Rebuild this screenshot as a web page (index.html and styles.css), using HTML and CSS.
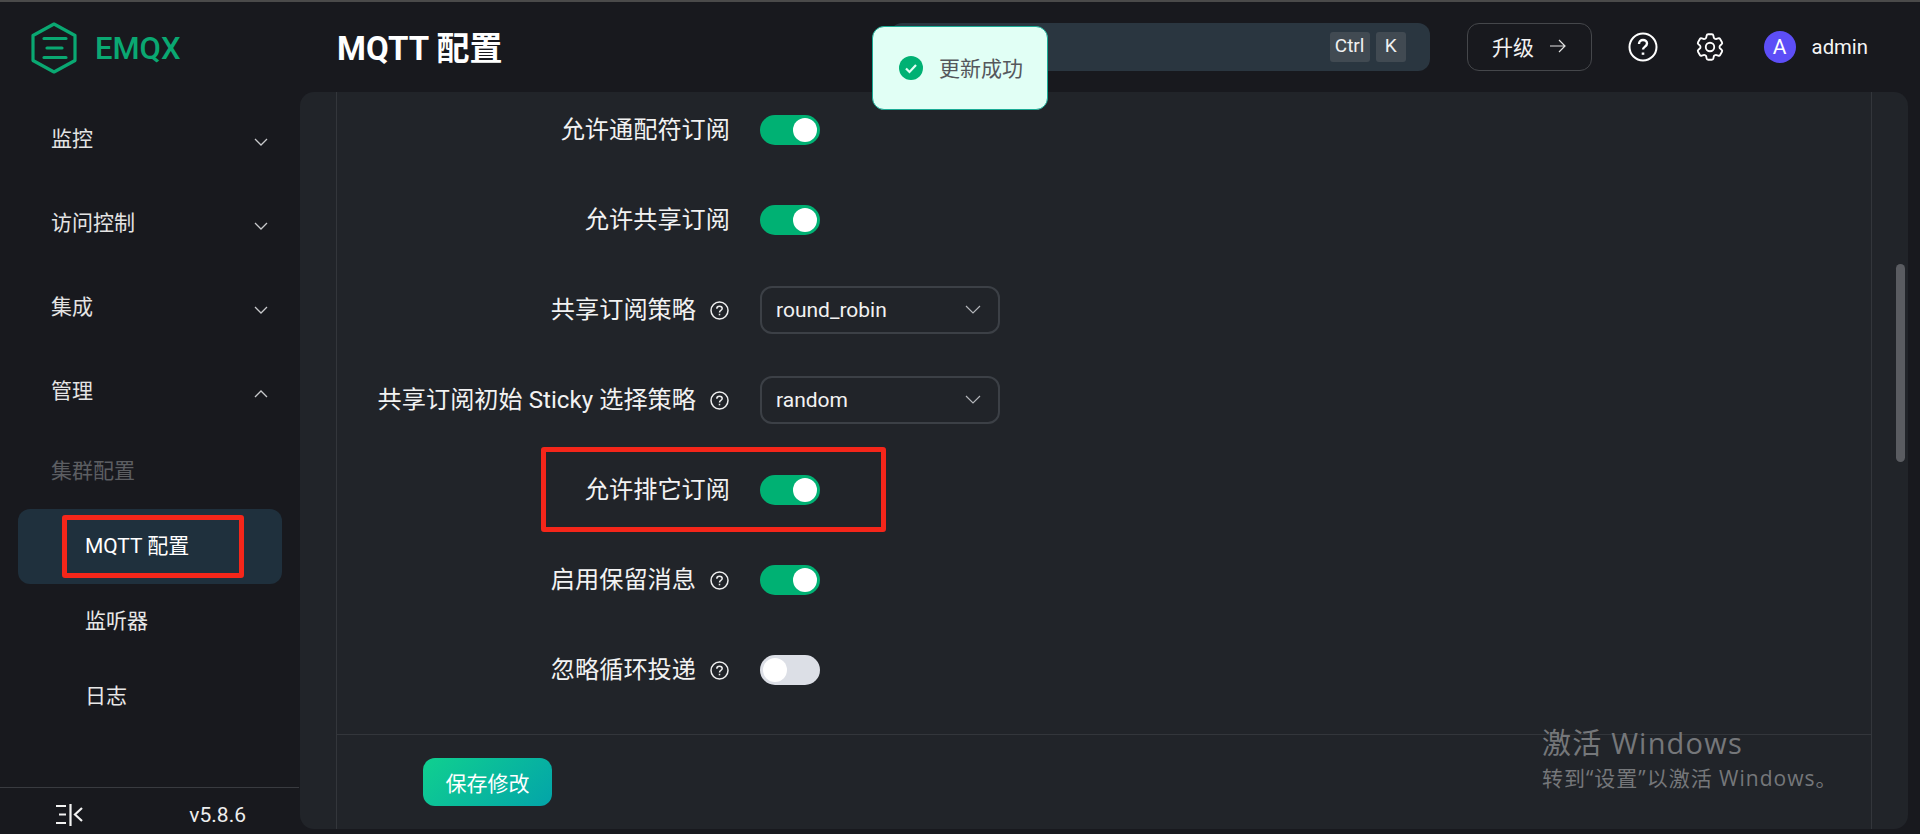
FILE: index.html
```html
<!DOCTYPE html>
<html lang="zh-CN">
<head>
    <meta charset="UTF-8">
    <meta name="viewport" content="width=device-width, initial-scale=1.0">
    <title>MQTT 配置</title>
    <link rel="stylesheet" href="styles.css">
</head>
<body>
    <div class="app">
        <aside class="sidebar">
            <div class="logo">
                <svg class="logo-mark" width="46" height="52" viewBox="0 0 46 52" fill="none" stroke="#0aa872" stroke-width="3.200" stroke-linecap="round" stroke-linejoin="round">
                    <path d="M23 2 44 13.500V38.500L23 50 2 38.500V13.500Z"/>
                    <path d="M13 16.500H35M16 26H31M13 35.500H35"/>
                </svg>
                <span class="logo-text">EMQX</span>
            </div>

            <nav class="nav">
                <div class="nav-item">
                    <span>监控</span>
                    <svg class="chevron" width="16" height="10" viewBox="0 0 16 10" fill="none" stroke="#c8c9cc" stroke-width="1.300"><path d="M2 2 8 8 14 2"/></svg>
                </div>
                <div class="nav-item">
                    <span>访问控制</span>
                    <svg class="chevron" width="16" height="10" viewBox="0 0 16 10" fill="none" stroke="#c8c9cc" stroke-width="1.300"><path d="M2 2 8 8 14 2"/></svg>
                </div>
                <div class="nav-item">
                    <span>集成</span>
                    <svg class="chevron" width="16" height="10" viewBox="0 0 16 10" fill="none" stroke="#c8c9cc" stroke-width="1.300"><path d="M2 2 8 8 14 2"/></svg>
                </div>
                <div class="nav-item">
                    <span>管理</span>
                    <svg class="chevron" width="16" height="10" viewBox="0 0 16 10" fill="none" stroke="#c8c9cc" stroke-width="1.300"><path d="M2 8 8 2 14 8"/></svg>
                </div>
                <div class="nav-group">集群配置</div>
                <div class="nav-sub active">
                    <span>MQTT 配置</span>
                    <div class="mark mark-nav"></div>
                </div>
                <div class="nav-sub">监听器</div>
                <div class="nav-sub">日志</div>
            </nav>

            <div class="sidebar-footer">
                <svg width="27" height="24" viewBox="0 0 27 24" fill="none" stroke="#f2f2f2" stroke-width="2.200">
                    <path d="M0 3H10M3 11.500H10M0 20H10M14.500 1V23"/>
                    <path d="M26 5 19 11.500 26 18"/>
                </svg>
                <span class="version">v5.8.6</span>
            </div>
        </aside>

        <div class="main">
            <header class="header">
                <h1 class="title">MQTT 配置</h1>
                <div class="search">
                    <span class="key key-ctrl">Ctrl</span>
                    <span class="key">K</span>
                </div>
                <button class="upgrade">
                    <span>升级</span>
                    <svg width="16" height="14" viewBox="0 0 16 14" fill="none" stroke="#e4e4e4" stroke-width="1.200"><path d="M0 7H15M9 1 15 7 9 13"/></svg>
                </button>
                <svg class="head-icon" width="30" height="30" viewBox="0 0 30 30" fill="none" stroke="#fff" stroke-width="2">
                    <circle cx="15" cy="15" r="13.500"/>
                    <path d="M11 12c0-2.600 1.800-4 4-4s4 1.400 4 3.600c0 3-4 3-4 6" stroke-width="2.400"/>
                    <path d="M15 20.500v2.300" stroke-width="2.600"/>
                </svg>
                <svg class="head-icon gear" width="34" height="34" viewBox="0 0 24 24" fill="none" stroke="#fff" stroke-width="1.300">
                    <path d="M9.594 3.940c.09-.542.56-.94 1.110-.94h2.593c.55 0 1.020.398 1.110.94l.213 1.281c.063.374.313.686.645.87.074.04.147.083.22.127.325.196.72.257 1.075.124l1.217-.456a1.125 1.125 0 0 1 1.370.49l1.296 2.247a1.125 1.125 0 0 1-.26 1.431l-1.003.827c-.293.241-.438.613-.43.992a7.723 7.723 0 0 1 0 .255c-.008.378.137.75.43.991l1.004.827c.424.35.534.955.26 1.430l-1.298 2.247a1.125 1.125 0 0 1-1.369.491l-1.217-.456c-.355-.133-.75-.072-1.076.124a6.470 6.470 0 0 1-.22.128c-.331.183-.581.495-.644.869l-.213 1.281c-.09.543-.56.94-1.110.94h-2.594c-.55 0-1.019-.398-1.110-.94l-.213-1.281c-.062-.374-.312-.686-.644-.87a6.520 6.520 0 0 1-.22-.127c-.325-.196-.72-.257-1.076-.124l-1.217.456a1.125 1.125 0 0 1-1.369-.49l-1.297-2.247a1.125 1.125 0 0 1 .26-1.431l1.004-.827c.292-.24.437-.613.43-.991a6.932 6.932 0 0 1 0-.255c.007-.38-.138-.751-.43-.992l-1.004-.827a1.125 1.125 0 0 1-.26-1.430l1.297-2.247a1.125 1.125 0 0 1 1.370-.491l1.216.456c.356.133.751.072 1.076-.124.072-.044.146-.086.22-.128.332-.183.582-.495.644-.869l.214-1.280Z"/>
                    <circle cx="12" cy="12" r="3"/>
                </svg>
                <div class="avatar">A</div>
                <span class="username">admin</span>
            </header>

            <section class="panel">
                <div class="panel-inner">
                    <div class="form">
                        <div class="row">
                            <div class="label">允许通配符订阅</div>
                            <span class="switch on"></span>
                        </div>
                        <div class="row">
                            <div class="label">允许共享订阅</div>
                            <span class="switch on"></span>
                        </div>
                        <div class="row">
                            <div class="label">共享订阅策略
                                <svg class="help" width="19" height="19" viewBox="0 0 19 19" fill="none" stroke="#eee" stroke-width="1.500"><circle cx="9.500" cy="9.500" r="8.500"/><path d="M6.800 7.700c0-1.700 1.200-2.500 2.700-2.500s2.700.8 2.700 2.300c0 2-2.700 1.900-2.700 3.900"/><path d="M9.500 12.800v1.500"/></svg>
                            </div>
                            <div class="select">
                                <span>round_robin</span>
                                <svg width="16" height="10" viewBox="0 0 16 10" fill="none" stroke="#b4b6ba" stroke-width="1.200"><path d="M1 1 8 8 15 1"/></svg>
                            </div>
                        </div>
                        <div class="row">
                            <div class="label">共享订阅初始 Sticky 选择策略
                                <svg class="help" width="19" height="19" viewBox="0 0 19 19" fill="none" stroke="#eee" stroke-width="1.500"><circle cx="9.500" cy="9.500" r="8.500"/><path d="M6.800 7.700c0-1.700 1.200-2.500 2.700-2.500s2.700.8 2.700 2.300c0 2-2.700 1.900-2.700 3.900"/><path d="M9.500 12.800v1.500"/></svg>
                            </div>
                            <div class="select">
                                <span>random</span>
                                <svg width="16" height="10" viewBox="0 0 16 10" fill="none" stroke="#b4b6ba" stroke-width="1.200"><path d="M1 1 8 8 15 1"/></svg>
                            </div>
                        </div>
                        <div class="row">
                            <div class="label">允许排它订阅</div>
                            <span class="switch on"></span>
                            <div class="mark mark-form"></div>
                        </div>
                        <div class="row">
                            <div class="label">启用保留消息
                                <svg class="help" width="19" height="19" viewBox="0 0 19 19" fill="none" stroke="#eee" stroke-width="1.500"><circle cx="9.500" cy="9.500" r="8.500"/><path d="M6.800 7.700c0-1.700 1.200-2.500 2.700-2.500s2.700.8 2.700 2.300c0 2-2.700 1.900-2.700 3.900"/><path d="M9.500 12.800v1.500"/></svg>
                            </div>
                            <span class="switch on"></span>
                        </div>
                        <div class="row">
                            <div class="label">忽略循环投递
                                <svg class="help" width="19" height="19" viewBox="0 0 19 19" fill="none" stroke="#eee" stroke-width="1.500"><circle cx="9.500" cy="9.500" r="8.500"/><path d="M6.800 7.700c0-1.700 1.200-2.500 2.700-2.500s2.700.8 2.700 2.300c0 2-2.700 1.900-2.700 3.900"/><path d="M9.500 12.800v1.500"/></svg>
                            </div>
                            <span class="switch"></span>
                        </div>
                    </div>
                    <div class="form-footer">
                        <button class="save">保存修改</button>
                    </div>
                </div>
                <div class="scrollbar"></div>
            </section>
        </div>
    </div>

    <div class="toast">
        <svg width="24" height="24" viewBox="0 0 24 24"><circle cx="12" cy="12" r="12" fill="#00b173"/><path d="M7 12.500 10.500 16 17 9" fill="none" stroke="#e1fff5" stroke-width="2.200"/></svg>
        <span class="toast-text">更新成功</span>
    </div>

    <div class="watermark">
        <div class="watermark-title">激活 Windows</div>
        <div class="watermark-text">转到“设置”以激活 Windows。</div>
    </div>
</body>
</html>
```

FILE: styles.css
```css
* {
    box-sizing: border-box;
}

body {
    margin: 0;
    height: 834px;
    overflow: hidden;
    font-family: Roboto, "Noto Sans CJK SC", sans-serif;
    background-color: #18191e;
    color: #f2f2f2;
    border-top: 2px solid #4a4a4a;
}

.app {
    display: flex;
    height: 832px;
}

/* sidebar */
.sidebar {
    width: 300px;
    flex-shrink: 0;
    display: flex;
    flex-direction: column;
}

.logo {
    height: 90px;
    padding: 20px 0 0 31px;
    display: flex;
    align-items: flex-start;
    gap: 18px;
}

.logo-text {
    padding-top: 1px;
    font-size: 31px;
    font-weight: 500;
    line-height: 52px;
    color: #0aa872;
}

.nav {
    flex: 1;
    padding-top: 15px;
}

.nav-item {
    height: 60px;
    margin-bottom: 24px;
    padding: 0 31px 0 51px;
    display: flex;
    align-items: center;
    justify-content: space-between;
    font-size: 21px;
    color: #e4e4e4;
}

.chevron {
    margin-top: 10px;
}

.nav-group {
    height: 57px;
    margin-bottom: 9px;
    padding-left: 51px;
    line-height: 57px;
    font-size: 21px;
    color: #5c5e62;
}

.nav-sub {
    position: relative;
    height: 75px;
    margin: 0 18px;
    padding-left: 67px;
    line-height: 75px;
    font-size: 21px;
    color: #e8e8e8;
    border-radius: 12px;
}

.nav-sub.active {
    background-color: #1f303d;
    color: #fff;
}

.mark {
    position: absolute;
    border: 5px solid #f5261a;
    border-radius: 3px;
}

.mark-nav {
    left: 44px;
    top: 6px;
    width: 182px;
    height: 63px;
}

.sidebar-footer {
    height: 47px;
    margin-right: 1px;
    padding: 8px 53px 0 56px;
    border-top: 1px solid #393b40;
    display: flex;
    align-items: center;
    justify-content: space-between;
}

.version {
    font-size: 21px;
    color: #eee;
}

/* top bar */
.main {
    flex: 1;
    min-width: 0;
    display: flex;
    flex-direction: column;
}

.header {
    height: 90px;
    flex-shrink: 0;
    padding: 0 52px 0 37px;
    display: flex;
    align-items: center;
}

.title {
    flex: 1;
    margin: 0;
    padding-bottom: 2px;
    font-size: 33px;
    font-weight: 700;
    color: #fff;
}

.search {
    width: 540px;
    height: 48px;
    margin-right: 37px;
    padding-right: 24px;
    display: flex;
    align-items: center;
    justify-content: flex-end;
    gap: 6px;
    background-color: #2a3640;
    border-radius: 12px;
}

.key {
    width: 30px;
    height: 30px;
    line-height: 28px;
    text-align: center;
    font-size: 19px;
    color: #f0f0f0;
    background-color: #414a52;
    border-radius: 3px;
}

.key-ctrl {
    width: 40px;
}

.upgrade {
    width: 125px;
    height: 48px;
    margin-right: 36px;
    padding: 0 0 2px;
    display: flex;
    align-items: center;
    justify-content: center;
    gap: 16px;
    font-family: inherit;
    font-size: 21px;
    color: #f2f2f2;
    background: none;
    border: 1px solid #45474b;
    border-radius: 12px;
}

.head-icon {
    flex-shrink: 0;
}

.gear {
    margin-left: 35px;
}

.avatar {
    width: 32px;
    height: 32px;
    margin-left: 37px;
    line-height: 32px;
    text-align: center;
    font-size: 21px;
    color: #fff;
    background-color: #5d4ef7;
    border-radius: 50%;
}

.username {
    margin-left: 16px;
    font-size: 20.300px;
    color: #f5f5f5;
}

/* form panel */
.panel {
    position: relative;
    flex: 1;
    min-height: 0;
    margin: 0 12px 5px 0;
    padding: 0 36px;
    background-color: #212429;
    border-radius: 14px;
}

.panel-inner {
    height: 100%;
    display: flex;
    flex-direction: column;
    border-left: 1px solid #33363b;
    border-right: 1px solid #33363b;
}

.form {
    flex: 1;
    min-height: 0;
    padding-top: 14px;
}

.row {
    position: relative;
    height: 48px;
    margin-bottom: 42px;
    display: flex;
    align-items: center;
    gap: 30px;
}

.label {
    width: 393px;
    display: flex;
    align-items: center;
    justify-content: flex-end;
    font-size: 24.200px;
    line-height: 32px;
    color: #f2f2f2;
}

.help {
    margin: 0 1px 0 14px;
}

.switch {
    position: relative;
    width: 60px;
    height: 30px;
    background-color: #dcdfe6;
    border-radius: 15px;
}

.switch::after {
    content: "";
    position: absolute;
    left: 3px;
    top: 3px;
    width: 24px;
    height: 24px;
    background-color: #fff;
    border-radius: 50%;
}

.switch.on {
    background-color: #00b173;
}

.switch.on::after {
    left: 33px;
}

.select {
    width: 240px;
    height: 48px;
    padding: 0 17px 0 14px;
    display: flex;
    align-items: center;
    justify-content: space-between;
    font-size: 21px;
    color: #f2f2f2;
    border: 2px solid #3c4046;
    border-radius: 12px;
}

.mark-form {
    left: 204px;
    top: -19px;
    width: 345px;
    height: 85px;
}

.form-footer {
    flex-shrink: 0;
    height: 95px;
    padding: 23px 0 0 86px;
    border-top: 1px solid #33363b;
}

.save {
    width: 129px;
    height: 48px;
    padding: 0;
    font-family: inherit;
    font-size: 21px;
    color: #fff;
    background: linear-gradient(135deg, #10d08f, #03a4a9);
    border: none;
    border-radius: 12px;
}

.scrollbar {
    position: absolute;
    right: 3px;
    top: 172px;
    width: 9px;
    height: 198px;
    background-color: #5a5c61;
    border-radius: 5px;
}

/* overlays */
.toast {
    position: absolute;
    left: 872px;
    top: 26px;
    width: 176px;
    height: 84px;
    padding-left: 26px;
    display: flex;
    align-items: center;
    gap: 16px;
    font-size: 21px;
    color: #55585c;
    background-color: #e1fff5;
    border: 1px solid #1aab95;
    border-radius: 12px;
}

.toast-text {
    margin-top: -3px;
}

.watermark {
    position: absolute;
    left: 1542px;
    top: 724px;
    font-family: "Open Sans", "Noto Sans CJK SC", sans-serif;
    color: #75777a;
}

.watermark-title {
    font-size: 29px;
    line-height: 38px;
    letter-spacing: 1.200px;
}

.watermark-text {
    font-size: 21px;
    line-height: 32px;
    letter-spacing: 1px;
}
```
